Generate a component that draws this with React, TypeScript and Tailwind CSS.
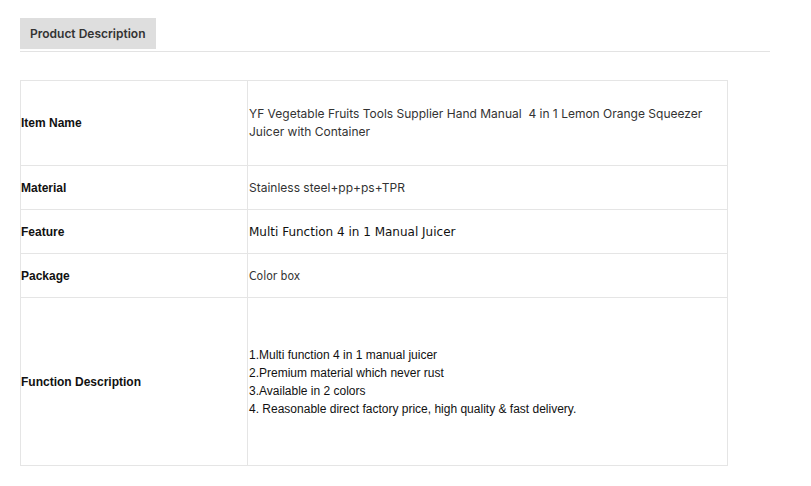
const rows = [
  {
    label: "Item Name",
    h: "h-[85px]",
    font: "font-['Inter',sans-serif] text-[#333]",
    lines: ["YF Vegetable Fruits Tools Supplier Hand Manual\u00a0 4 in 1 Lemon Orange Squeezer Juicer with Container"],
  },
  { label: "Material", h: "h-[44px]", font: "font-['Inter',sans-serif] text-[#333]", lines: ["Stainless steel+pp+ps+TPR"] },
  { label: "Feature", h: "h-[44px]", font: "font-['DejaVu_Sans',sans-serif] text-[#111]", lines: ["Multi Function 4 in 1 Manual Juicer"] },
  { label: "Package", h: "h-[44px]", font: "font-['DejaVu_Sans_Condensed','DejaVu_Sans',sans-serif] text-[#333]", lines: ["Color box"] },
  {
    label: "Function Description",
    h: "h-[168px]",
    font: "font-['Liberation_Sans',Arial,sans-serif] text-[#111]",
    lines: [
      "1.Multi function 4 in 1 manual juicer",
      "2.Premium material which never rust",
      "3.Available in 2 colors",
      "4. Reasonable direct factory price, high quality & fast delivery.",
    ],
  },
];

export default function App() {
  return (
    <div className="min-h-[486px] bg-white px-5 pt-[18px]">
      <div className="w-[750px] border-b border-[#e3e3e3] pb-[2px]">
        <div className="inline-flex h-[31px] items-center bg-[#dedede] px-[10px] font-['Inter',sans-serif] text-[12px] font-semibold text-[#333]">
          Product Description
        </div>
      </div>
      <table className="mt-[28px] w-[708px] border-collapse text-[12px] leading-[18px]">
        <tbody>
          {rows.map((r) => (
            <tr key={r.label} className={r.h}>
              <td className="w-[227px] border border-[#e5e5e5] px-0 align-middle font-['Liberation_Sans',Arial,sans-serif] font-bold text-[#111]">
                {r.label}
              </td>
              <td className={`border border-[#e5e5e5] pl-px pr-4 align-middle ${r.font}`}>
                {r.lines.map((l) => (
                  <div key={l}>{l}</div>
                ))}
              </td>
            </tr>
          ))}
        </tbody>
      </table>
    </div>
  );
}
